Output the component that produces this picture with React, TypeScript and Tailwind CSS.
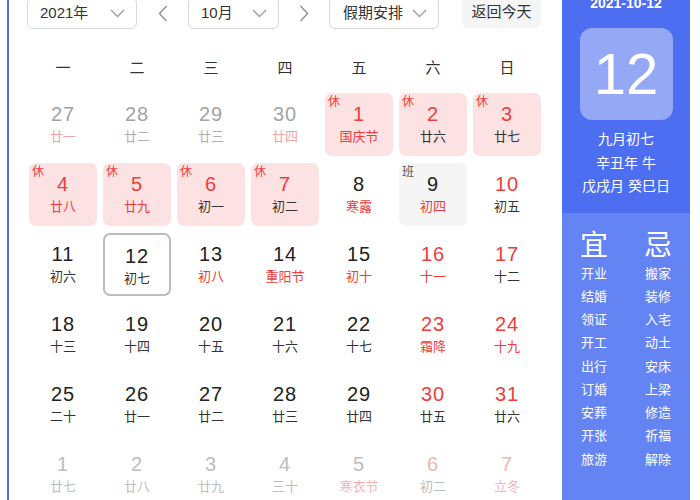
import React from "react";

type Cell = {
  n: number;
  l: string;
  nc: string;
  lc: string;
  kind?: "hol" | "work" | "today";
};

const RED = "text-[#f03c3c]";
const DARK = "text-[#222222]";
const LDARK = "text-[#333333]";
const GRAY = "text-[#a3a3a3]";
const LGRAY = "text-[#b0b0b0]";
const PINK = "text-[#f0a3a3]";
const NGRAY = "text-[#bdbdbd]";
const NPINK = "text-[#f3b4b4]";

const rows: Cell[][] = [
  [
    { n: 27, l: "廿一", nc: GRAY, lc: PINK },
    { n: 28, l: "廿二", nc: GRAY, lc: LGRAY },
    { n: 29, l: "廿三", nc: GRAY, lc: LGRAY },
    { n: 30, l: "廿四", nc: GRAY, lc: PINK },
    { n: 1, l: "国庆节", nc: RED, lc: RED, kind: "hol" },
    { n: 2, l: "廿六", nc: RED, lc: LDARK, kind: "hol" },
    { n: 3, l: "廿七", nc: RED, lc: LDARK, kind: "hol" },
  ],
  [
    { n: 4, l: "廿八", nc: RED, lc: RED, kind: "hol" },
    { n: 5, l: "廿九", nc: RED, lc: RED, kind: "hol" },
    { n: 6, l: "初一", nc: RED, lc: LDARK, kind: "hol" },
    { n: 7, l: "初二", nc: RED, lc: LDARK, kind: "hol" },
    { n: 8, l: "寒露", nc: DARK, lc: RED },
    { n: 9, l: "初四", nc: DARK, lc: RED, kind: "work" },
    { n: 10, l: "初五", nc: RED, lc: LDARK },
  ],
  [
    { n: 11, l: "初六", nc: DARK, lc: LDARK },
    { n: 12, l: "初七", nc: DARK, lc: LDARK, kind: "today" },
    { n: 13, l: "初八", nc: DARK, lc: RED },
    { n: 14, l: "重阳节", nc: DARK, lc: RED },
    { n: 15, l: "初十", nc: DARK, lc: RED },
    { n: 16, l: "十一", nc: RED, lc: RED },
    { n: 17, l: "十二", nc: RED, lc: LDARK },
  ],
  [
    { n: 18, l: "十三", nc: DARK, lc: LDARK },
    { n: 19, l: "十四", nc: DARK, lc: LDARK },
    { n: 20, l: "十五", nc: DARK, lc: LDARK },
    { n: 21, l: "十六", nc: DARK, lc: LDARK },
    { n: 22, l: "十七", nc: DARK, lc: LDARK },
    { n: 23, l: "霜降", nc: RED, lc: RED },
    { n: 24, l: "十九", nc: RED, lc: RED },
  ],
  [
    { n: 25, l: "二十", nc: DARK, lc: LDARK },
    { n: 26, l: "廿一", nc: DARK, lc: LDARK },
    { n: 27, l: "廿二", nc: DARK, lc: LDARK },
    { n: 28, l: "廿三", nc: DARK, lc: LDARK },
    { n: 29, l: "廿四", nc: DARK, lc: LDARK },
    { n: 30, l: "廿五", nc: RED, lc: LDARK },
    { n: 31, l: "廿六", nc: RED, lc: LDARK },
  ],
  [
    { n: 1, l: "廿七", nc: NGRAY, lc: NGRAY },
    { n: 2, l: "廿八", nc: NGRAY, lc: NGRAY },
    { n: 3, l: "廿九", nc: NGRAY, lc: NGRAY },
    { n: 4, l: "三十", nc: NGRAY, lc: NGRAY },
    { n: 5, l: "寒衣节", nc: NGRAY, lc: NPINK },
    { n: 6, l: "初二", nc: NPINK, lc: NGRAY },
    { n: 7, l: "立冬", nc: NPINK, lc: NPINK },
  ],
];

const yi = ["开业", "结婚", "领证", "开工", "出行", "订婚", "安葬", "开张", "旅游"];
const ji = ["搬家", "装修", "入宅", "动土", "安床", "上梁", "修造", "祈福", "解除"];
const weekdays = ["一", "二", "三", "四", "五", "六", "日"];

function Chevron() {
  return (
    <svg width="15" height="9" viewBox="0 0 15 9" fill="none">
      <polyline points="1,1 7.5,7.5 14,1" stroke="#9a9ca3" strokeWidth="1.3" />
    </svg>
  );
}

function Arrow({ dir }: { dir: "l" | "r" }) {
  return (
    <svg width="10" height="17" viewBox="0 0 10 17" fill="none">
      {dir === "l" ? (
        <polyline points="8.5,1 1.5,8.5 8.5,16" stroke="#8a8c92" strokeWidth="1.3" />
      ) : (
        <polyline points="1.5,1 8.5,8.5 1.5,16" stroke="#8a8c92" strokeWidth="1.3" />
      )}
    </svg>
  );
}

function DayCell({ c }: { c: Cell }) {
  let box = "relative mx-[3px] h-[63px] rounded-[7px] flex flex-col items-center pt-[8px]";
  if (c.kind === "hol") box += " bg-[#fde2e3]";
  if (c.kind === "work") box += " bg-[#f5f5f6]";
  if (c.kind === "today") box += " border-2 border-[#bcbcbc] pt-[6px]";
  return (
    <div className={box}>
      {c.kind === "hol" && (
        <span className="absolute left-[3px] top-[1px] text-[12px] leading-[16px] text-[#f03c3c]">休</span>
      )}
      {c.kind === "work" && (
        <span className="absolute left-[3px] top-[1px] text-[12px] leading-[16px] text-[#555555]">班</span>
      )}
      <div className={`text-[20px] leading-[26px] tracking-[1px] ${c.nc}`}>{c.n}</div>
      <div className={`text-[13px] leading-[20px] ${c.lc}`}>{c.l}</div>
    </div>
  );
}

export default function App() {
  return (
    <div
      className="w-[700px] h-[500px] overflow-hidden bg-white"
      style={{ fontFamily: '"Liberation Sans", "Noto Sans CJK SC", Arial, sans-serif' }}
    >
      <div className="ml-[7px] -mt-[13px] flex border-l-2 border-[#4e6ef2]">
        {/* left calendar */}
        <div className="w-[553px] pl-[17px] pt-[10px]">
          <div className="flex items-center h-[32px] pl-[1px]">
            <div className="w-[110px] h-[32px] border border-[#d7d9e0] rounded-[6px] flex items-center justify-between pl-[12px] pr-[11px] text-[15px] text-[#333]">
              <span>2021年</span>
              <Chevron />
            </div>
            <div className="w-[51px] flex justify-center">
              <Arrow dir="l" />
            </div>
            <div className="w-[91px] h-[32px] border border-[#d7d9e0] rounded-[6px] flex items-center justify-between pl-[12px] pr-[11px] text-[15px] text-[#333]">
              <span>10月</span>
              <Chevron />
            </div>
            <div className="w-[50px] flex justify-center">
              <Arrow dir="r" />
            </div>
            <div className="w-[110px] h-[32px] border border-[#d7d9e0] rounded-[6px] flex items-center justify-between pl-[13px] pr-[11px] text-[15px] text-[#333]">
              <span>假期安排</span>
              <Chevron />
            </div>
            <div className="ml-[23px] w-[79px] h-[31px] bg-[#f5f5f6] rounded-[6px] flex items-center justify-center text-[15px] text-[#333] -mt-[1px]">
              返回今天
            </div>
          </div>

          <div className="grid grid-cols-[repeat(7,74px)] mt-[19px] h-[40px] items-center">
            {weekdays.map((w) => (
              <div key={w} className="text-center text-[15px] text-[#333]">
                {w}
              </div>
            ))}
          </div>

          <div className="mt-[5px] flex flex-col gap-[7px]">
            {rows.map((r, i) => (
              <div key={i} className="grid grid-cols-[repeat(7,74px)]">
                {r.map((c, j) => (
                  <DayCell key={j} c={c} />
                ))}
              </div>
            ))}
          </div>
        </div>

        {/* right panel */}
        <div className="w-[128px] flex flex-col text-white">
          <div className="bg-[#4e6ef2] pt-[6px] pb-[14px] flex flex-col items-center">
            <div className="text-[14px] leading-[20px] font-bold">2021-10-12</div>
            <div className="mt-[15px] w-[93px] h-[92px] rounded-[12px] bg-[#94a8f6] flex items-center justify-center text-[58px] leading-none">
              12
            </div>
            <div className="mt-[8px] text-[14px] leading-[23.5px] text-center">
              <div>九月初七</div>
              <div>辛丑年 牛</div>
              <div>戊戌月 癸巳日</div>
            </div>
          </div>
          <div className="bg-[#6584f4] h-[300px] pt-[17px] grid grid-cols-2">
            <div className="flex flex-col items-center">
              <div className="text-[28px] leading-[32px]">宜</div>
              {yi.map((t) => (
                <div key={t} className="text-[13px] leading-[23.25px]">
                  {t}
                </div>
              ))}
            </div>
            <div className="flex flex-col items-center">
              <div className="text-[28px] leading-[32px]">忌</div>
              {ji.map((t) => (
                <div key={t} className="text-[13px] leading-[23.25px]">
                  {t}
                </div>
              ))}
            </div>
          </div>
        </div>
      </div>
    </div>
  );
}
